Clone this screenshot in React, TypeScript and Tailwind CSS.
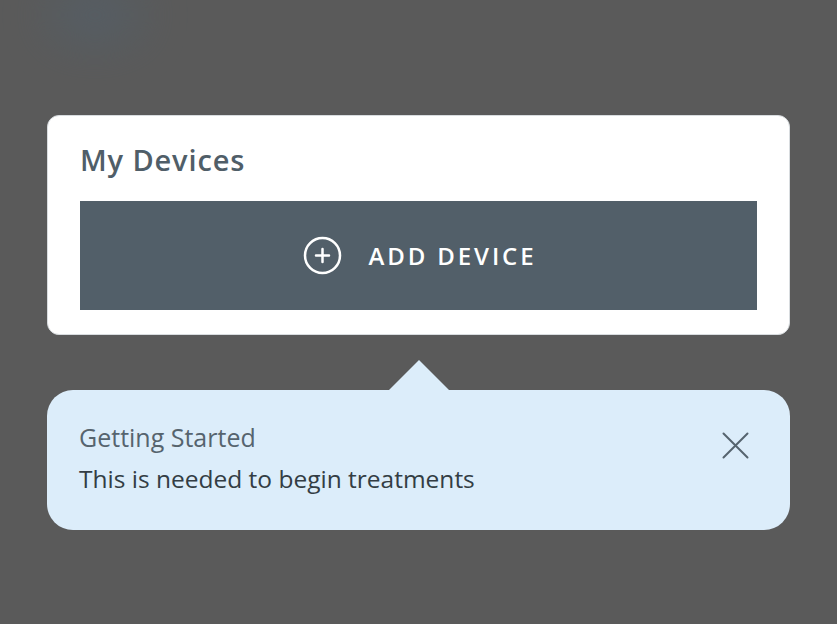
export default function App() {
  return (
    <div
      className="relative h-[624px] w-full overflow-hidden bg-[#5a5a5a]"
      style={{ fontFamily: "'Open Sans', Lato, sans-serif" }}
    >
      {/* blurred page behind the overlay */}
      <div className="absolute left-[50px] top-[-10px] h-[50px] w-[90px] rounded-full bg-[#53606b] blur-xl opacity-70" />

      <div className="relative flex flex-col pl-[47px] pr-[47px] pt-[115px]">
        {/* My Devices card */}
        <div className="flex h-[220px] flex-col rounded-[12px] border border-[#d8dcdf] bg-white px-[32px] pb-[24px] pt-[25px]">
          <h2 className="text-[29px] font-semibold leading-[38px] tracking-[0.03em] text-[#505e68]">My Devices</h2>
          <button className="mt-[22px] flex flex-1 items-center justify-center gap-[27px] bg-[#525f69] pl-[2px] text-white">
            <svg width="39" height="39" viewBox="0 0 39 39" fill="none" stroke="currentColor" strokeWidth="2.5" strokeLinecap="round">
              <circle cx="19.5" cy="19.5" r="17.5" />
              <path d="M19.5 13v13M13 19.5h13" />
            </svg>
            <span className="text-[24px] font-semibold tracking-[0.12em]">ADD DEVICE</span>
          </button>
        </div>

        {/* tooltip */}
        <div className="relative mt-[55px] flex h-[140px] items-start justify-between rounded-[26px] bg-[#dcedfa] pl-[32px] pr-[41px] pt-[30px]">
          <div className="absolute left-[341px] top-[-30px] h-0 w-0 border-x-[31px] border-b-[31px] border-x-transparent border-b-[#dcedfa]" />
          <div className="flex flex-col gap-[8px]">
            <p className="text-[25px] leading-[34px] text-[#56646e]">Getting Started</p>
            <p className="text-[24.5px] leading-[34px] text-[#333d44]">This is needed to begin treatments</p>
          </div>
          <button className="mt-[12px] text-[#56646e]">
            <svg width="27" height="27" viewBox="0 0 27 27" fill="none" stroke="currentColor" strokeWidth="2" strokeLinecap="round">
              <path d="M1.5 1.5l24 24M25.5 1.5l-24 24" />
            </svg>
          </button>
        </div>
      </div>
    </div>
  );
}
